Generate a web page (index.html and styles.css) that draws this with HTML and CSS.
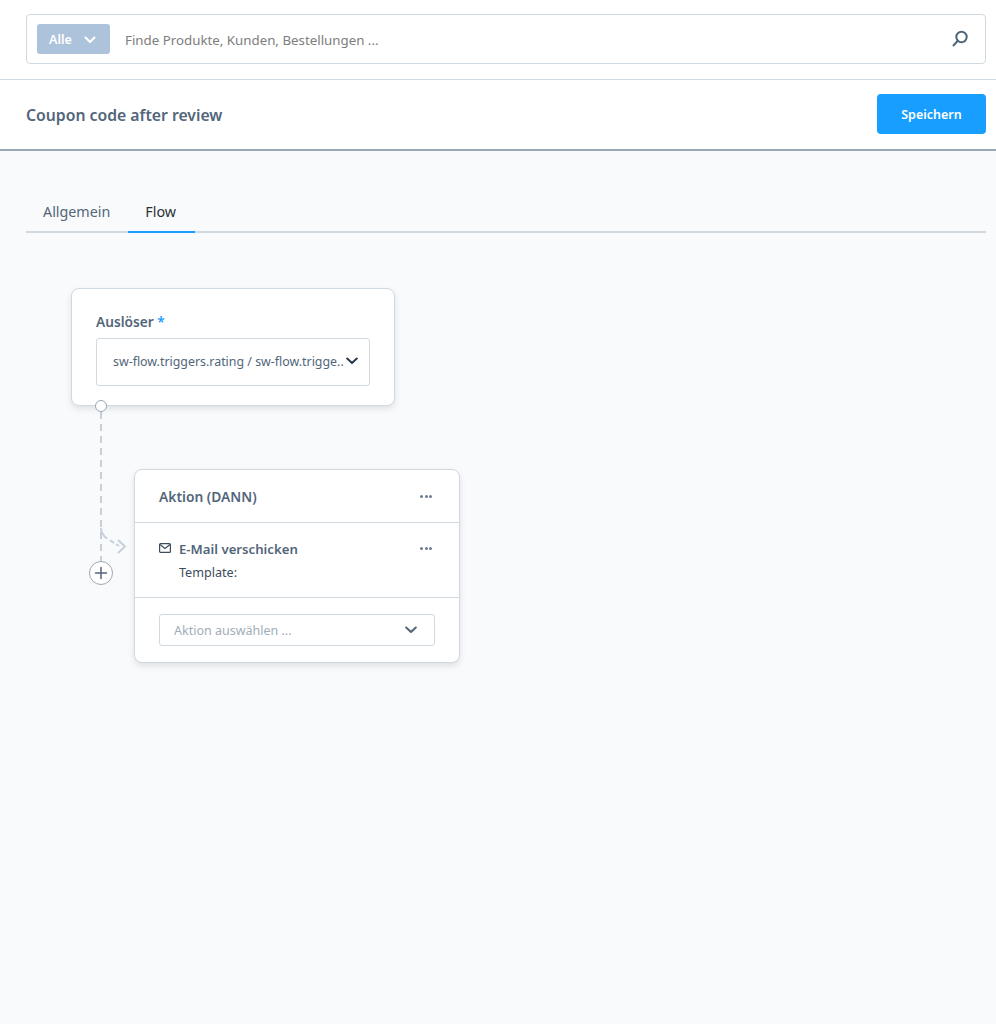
FILE: index.html
```html
<!DOCTYPE html>
<html lang="de">
<head>
<meta charset="utf-8">
<title>Coupon code after review</title>
<link rel="stylesheet" href="styles.css">
</head>
<body>
<header class="search-bar">
  <div class="search-box">
    <div class="type-pill"><span>Alle</span>
      <svg class="type-chevron" width="12" height="8" viewBox="0 0 12 8"><path d="M1.500 1.500 6 6l4.500-4.500" fill="none" stroke="#fff" stroke-width="2" stroke-linecap="round" stroke-linejoin="round"/></svg>
    </div>
    <span class="search-placeholder">Finde Produkte, Kunden, Bestellungen ...</span>
    <svg class="search-icon" width="18" height="18" viewBox="0 0 18 18"><circle cx="10.500" cy="7" r="5.200" fill="none" stroke="#52667a" stroke-width="2"/><path d="M6.800 10.800 2.500 15.500" fill="none" stroke="#52667a" stroke-width="2" stroke-linecap="round"/></svg>
  </div>
</header>
<section class="smart-bar">
  <h1 class="page-title">Coupon code after review</h1>
  <button class="save-button">Speichern</button>
</section>
<main class="content">
  <nav class="tabs">
    <a class="tab">Allgemein</a>
    <a class="tab tab-active">Flow</a>
  </nav>
  <div class="canvas">
    <svg class="connector" width="60" height="200" viewBox="0 0 60 200">
      <path d="M31 9V158" fill="none" stroke="#c5d0db" stroke-width="2" stroke-dasharray="7 5"/>
      <path d="M31 125C31 130 33.500 133 37 135.500L49 143" fill="none" stroke="#c5d0db" stroke-width="2" stroke-dasharray="13 3 5 2 6"/>
      <path d="M48 137 55 143.500 48 150" fill="none" stroke="#c5d0db" stroke-width="2"/>
    </svg>
    <div class="node node-trigger">
      <label class="field-label">Auslöser <span class="required">*</span></label>
      <div class="select">
        <span class="select-value">sw-flow.triggers.rating / sw-flow.trigge..</span>
        <svg width="12" height="8" viewBox="0 0 12 8"><path d="M1.200 1.500 6 6l4.800-4.500" fill="none" stroke="#2b3a4a" stroke-width="2" stroke-linecap="round" stroke-linejoin="round"/></svg>
      </div>
      <span class="port"></span>
    </div>
    <button class="add-button">
      <svg width="14" height="14" viewBox="0 0 14 14"><path d="M7 1.500v11M1.500 7h11" fill="none" stroke="#52667a" stroke-width="1.500" stroke-linecap="round"/></svg>
    </button>
    <div class="node node-action">
      <div class="action-head">
        <span class="action-title">Aktion (DANN)</span>
        <span class="dots"><i></i><i></i><i></i></span>
      </div>
      <div class="action-row">
        <svg class="mail-icon" width="12" height="10" viewBox="0 0 12 10"><rect x=".6" y=".6" width="10.800" height="8.800" rx="1" fill="none" stroke="#3d4c5c" stroke-width="1.200"/><path d="M1 1.500 6 5.500l5-4" fill="none" stroke="#3d4c5c" stroke-width="1.200"/></svg>
        <div class="action-text">
          <div class="action-name">E-Mail verschicken</div>
          <div class="action-meta">Template:</div>
        </div>
        <span class="dots"><i></i><i></i><i></i></span>
      </div>
      <div class="action-foot">
        <div class="select select-small">
          <span class="select-placeholder">Aktion auswählen ...</span>
          <svg width="12" height="8" viewBox="0 0 12 8"><path d="M1.200 1.500 6 6l4.800-4.500" fill="none" stroke="#52667a" stroke-width="2" stroke-linecap="round" stroke-linejoin="round"/></svg>
        </div>
      </div>
    </div>
  </div>
</main>
</body>
</html>
```
FILE: styles.css
```css
* { box-sizing: border-box; }
html, body { height: 100%; }
body {
  margin: 0;
  display: flex;
  flex-direction: column;
  min-height: 1024px;
  background: #f9fafb;
  font-family: "Noto Sans", "Liberation Sans", sans-serif;
  color: #52667a;
  overflow: hidden;
}
.search-bar {
  height: 80px;
  padding: 14px 10px 15px 26px;
  background: #fff;
  border-bottom: 1px solid #d1d9e0;
}
.search-box {
  height: 50px;
  display: flex;
  align-items: center;
  padding: 0 16px 0 10px;
  border: 1px solid #d1d9e0;
  border-radius: 4px;
  background: #fff;
}
.type-pill {
  width: 73px;
  height: 30px;
  display: flex;
  align-items: center;
  justify-content: space-between;
  padding: 0 14px 0 12px;
  border-radius: 3px;
  background: #adc3db;
  color: #fff;
  font-size: 12.500px;
  font-weight: 600;
}
.type-chevron { margin-top: 2px; }
.search-placeholder {
  margin: 1px 0 0 15px;
  font-size: 13.300px;
  color: #7d7d7d;
  flex: 1;
}
.smart-bar {
  height: 71px;
  display: flex;
  align-items: center;
  justify-content: space-between;
  padding: 0 10px 1px 26px;
  background: #fff;
  border-bottom: 2px solid #9aa8b5;
}
.page-title {
  margin: 1px 0 0;
  font-size: 15.750px;
  font-weight: 600;
  color: #52667a;
}
.save-button {
  width: 109px;
  height: 40px;
  border: 0;
  border-radius: 4px;
  background: #189eff;
  color: #fff;
  font: 600 12.500px "Noto Sans", sans-serif;
}
.content {
  flex: 1;
  padding: 40px 10px 0 26px;
  display: flex;
  flex-direction: column;
}
.tabs {
  height: 42px;
  display: flex;
  border-bottom: 2px solid #d1d9e0;
}
.tab {
  height: 42px;
  padding: 10px 18px 0 17px;
  font-size: 14.300px;
  line-height: 22px;
  color: #52667a;
}
.tab-active {
  width: 67px;
  color: #2b3136;
  border-bottom: 2px solid #189eff;
}
.canvas {
  position: relative;
  flex: 1;
}
.node {
  position: absolute;
  background: #fff;
  border: 1px solid #d1d9e0;
  border-radius: 8px;
  box-shadow: 0 3px 6px rgba(0, 0, 0, .1);
}
.node-trigger {
  left: 45px;
  top: 55px;
  width: 324px;
  height: 118px;
  padding: 23px 24px 0;
}
.field-label {
  display: block;
  font-size: 13.700px;
  font-weight: 600;
  line-height: 20px;
  color: #52667a;
}
.required { color: #189eff; }
.select {
  display: flex;
  align-items: center;
  justify-content: space-between;
  border: 1px solid #d1d9e0;
  border-radius: 3px;
  background: #fff;
}
.node-trigger .select {
  height: 48px;
  margin-top: 6px;
  padding: 0 11px 2px 16px;
}
.select-value {
  font-size: 12.400px;
  color: #52667a;
  white-space: nowrap;
}
.port {
  position: absolute;
  left: 23px;
  bottom: -7px;
  width: 12px;
  height: 12px;
  border: 1px solid #9aa8b5;
  border-radius: 50%;
  background: #fff;
}
.connector {
  position: absolute;
  left: 44px;
  top: 170px;
}
.add-button {
  position: absolute;
  left: 63px;
  top: 328px;
  width: 24px;
  height: 24px;
  padding: 0;
  display: flex;
  align-items: center;
  justify-content: center;
  border: 1px solid #9aa8b5;
  border-radius: 50%;
  background: #fff;
}
.node-action {
  left: 108px;
  top: 236px;
  width: 326px;
  height: 194px;
}
.action-head {
  height: 53px;
  display: flex;
  align-items: center;
  justify-content: space-between;
  padding: 0 27px 0 24px;
  border-bottom: 1px solid #d1d9e0;
}
.action-title {
  font-size: 13.800px;
  font-weight: 600;
  color: #52667a;
}
.dots { display: flex; gap: 1.500px; }
.dots i {
  width: 3px;
  height: 3px;
  border-radius: 50%;
  background: #6a7c8e;
}
.action-row {
  position: relative;
  height: 75px;
  padding: 16px 27px 0 24px;
  display: flex;
  border-bottom: 1px solid #d1d9e0;
}
.mail-icon { margin-top: 4px; flex: none; }
.action-text { margin-left: 8px; flex: 1; }
.action-name {
  font-size: 13.200px;
  font-weight: 600;
  line-height: 20px;
  color: #52667a;
}
.action-meta {
  font-size: 12.600px;
  line-height: 20px;
  margin-top: 4px;
  color: #3d4c5c;
}
.action-row .dots { margin-top: 8px; align-self: flex-start; }
.action-foot { padding: 16px 24px 0; }
.select-small {
  height: 32px;
  padding: 0 17px 0 14px;
}
.select-placeholder {
  font-size: 12.500px;
  color: #a0adb9;
}
```
